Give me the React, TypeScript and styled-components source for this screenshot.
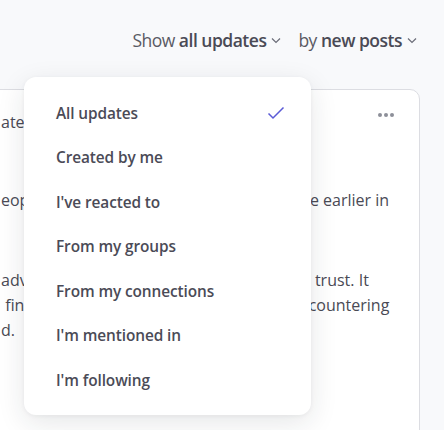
import styled, { createGlobalStyle } from "styled-components";

const GlobalStyle = createGlobalStyle`
  * { box-sizing: border-box; }
  body {
    margin: 0;
    background: #f8f9fb;
    font-family: "Open Sans", "Noto Sans", sans-serif;
    color: #4a4a55;
    overflow: hidden;
  }
`;

const Page = styled.div`
  position: relative;
  width: 444px;
  height: 430px;
  overflow: hidden;
`;

const Toolbar = styled.div`
  display: flex;
  justify-content: flex-end;
  align-items: center;
  gap: 17px;
  height: 40px;
  margin-top: 20px;
  padding-right: 27px;
`;

const Picker = styled.button`
  display: flex;
  align-items: center;
  padding: 0;
  border: none;
  background: none;
  font-family: inherit;
  font-size: 17.5px;
  color: #5a5a64;
  letter-spacing: -0.5px;
  white-space: pre;
  cursor: pointer;
  b {
    font-weight: 600;
    color: #4a4a55;
  }
  svg {
    margin-left: 5px;
  }
`;

const Card = styled.div`
  margin: 29px 0 0 -40px;
  width: 460px;
  height: 400px;
  background: #fff;
  border: 1px solid #dcdde2;
  border-radius: 10px;
  padding: 20px 24px 0 40px;
  position: relative;
  font-size: 16px;
  line-height: 25px;
  color: #4a4a55;
`;

const Line = styled.span<{ $gap?: number; $spacing?: number }>`
  display: block;
  white-space: nowrap;
  margin-top: ${(p) => p.$gap ?? 0}px;
  word-spacing: ${(p) => p.$spacing ?? 0}px;
`;

const MoreButton = styled.span`
  position: absolute;
  right: 25px;
  top: 23px;
  display: flex;
  gap: 2px;
  span {
    width: 4px;
    height: 4px;
    border-radius: 50%;
    background: #8d8f99;
  }
`;

const Menu = styled.ul`
  position: absolute;
  left: 24px;
  top: 77px;
  width: 287px;
  margin: 0;
  padding: 14px 0 12px;
  list-style: none;
  background: #fff;
  border-radius: 12px;
  box-shadow: 0 8px 28px rgba(30, 32, 45, 0.11), 0 1px 4px rgba(30, 32, 45, 0.05);
`;

const Item = styled.li`
  display: flex;
  align-items: center;
  justify-content: space-between;
  height: 44.5px;
  padding: 0 26px 0 32px;
  font-size: 15.4px;
  font-weight: 600;
  color: #4b4b57;
  letter-spacing: -0.1px;
  cursor: pointer;
`;

const Chevron = () => (
  <svg width="10" height="7" viewBox="0 0 10 7" fill="none">
    <path d="M1 1.5l4 4 4-4" stroke="#6b6d78" strokeWidth="1.2" />
  </svg>
);

const Check = () => (
  <svg width="18" height="14" viewBox="0 0 18 14" fill="none">
    <path d="M1.5 7.5l4.5 4.5L16.5 1.5" stroke="#5b5bd6" strokeWidth="1.5" />
  </svg>
);

const options = [
  "All updates",
  "Created by me",
  "I've reacted to",
  "From my groups",
  "From my connections",
  "I'm mentioned in",
  "I'm following",
];

export default function App() {
  return (
    <Page>
      <GlobalStyle />
      <Toolbar>
        <Picker>
          {"Show "}
          <b>all updates</b>
          <Chevron />
        </Picker>
        <Picker>
          {"by "}
          <b>new posts</b>
          <Chevron />
        </Picker>
      </Toolbar>

      <Card>
        <MoreButton>
          <span />
          <span />
          <span />
        </MoreButton>
        <Line>ated 2 hours ago</Line>
        <Line $gap={53}>eople shared notes on the plans you made earlier in</Line>
        <Line $gap={55} $spacing={0.2}>advice from people they know as it builds trust. It</Line>
        <Line>{"\u00a0"}finds its way into plans that they keep encountering</Line>
        <Line>d.</Line>
      </Card>

      <Menu>
        {options.map((o, i) => (
          <Item key={o}>
            {o}
            {i === 0 && <Check />}
          </Item>
        ))}
      </Menu>
    </Page>
  );
}
